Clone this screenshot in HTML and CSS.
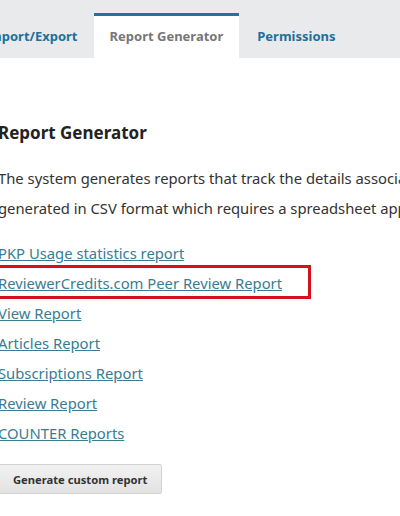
FILE: index.html
```html
<!DOCTYPE html>
<html>
<head>
  <title>Statistics - Report Generator</title>
  <link rel="stylesheet" href="styles.css">
</head>
<body>
  <div class="tabs">
    <a class="tab" href="#">Import/Export</a>
    <a class="tab active" href="#">Report Generator</a>
    <a class="tab" href="#">Permissions</a>
  </div>

  <div class="panel">
    <h2>Report Generator</h2>
    <p class="intro">The system generates reports that track the details associated with site usage and submissions over a given period of time. Reports are<br>generated in CSV format which requires a spreadsheet application to view.</p>

    <ul class="report-list">
      <li><a href="#">PKP Usage statistics report</a></li>
      <li class="highlight"><a href="#">ReviewerCredits.com Peer Review Report</a></li>
      <li><a href="#">View Report</a></li>
      <li><a href="#">Articles Report</a></li>
      <li><a href="#">Subscriptions Report</a></li>
      <li><a href="#">Review Report</a></li>
      <li><a href="#">COUNTER Reports</a></li>
    </ul>

    <button class="custom-button">Generate custom report</button>
  </div>
</body>
</html>
```

FILE: styles.css
```css
body {
  margin: 0;
  font-family: "Noto Sans", "Open Sans", sans-serif;
  background-color: #fff;
  color: #222;
  overflow: hidden;
}
.tabs {
  display: flex;
  background-color: #e8eaeb;
  height: 58px;
  padding-top: 13px;
  box-sizing: border-box;
  margin-left: -32px;
  white-space: nowrap;
}
.tab {
  display: block;
  padding: 0 16px;
  line-height: 41px;
  font-size: 13px;
  font-weight: bold;
  color: #1f6f9c;
  text-decoration: none;
  border-top: 3px solid transparent;
}
.tab.active {
  background-color: #fff;
  color: #777;
  border-top-color: #2a6f96;
  margin-right: 2px;
}
.panel {
  margin-left: -2px;
  padding-top: 60px;
}
.panel h2 {
  margin: 0 0 15px 0;
  font-size: 17px;
  font-weight: bold;
  line-height: 30px;
}
.intro {
  margin: 0 0 15px 0;
  font-size: 14.8px;
  line-height: 30px;
  color: #333;
  white-space: nowrap;
}
.report-list {
  list-style: none;
  margin: 0;
  padding: 0;
}
.report-list li {
  font-size: 14.8px;
  line-height: 30px;
}
.report-list a {
  color: #3a7c92;
}
.report-list .highlight {
  position: relative;
}
.report-list .highlight::after {
  content: "";
  position: absolute;
  left: -10px;
  top: -3px;
  bottom: -1px;
  width: 323px;
  box-sizing: border-box;
  border: 3px solid #d3121c;
  pointer-events: none;
}
.custom-button {
  margin-top: 16px;
  padding: 0 14px;
  height: 30px;
  font-family: inherit;
  font-size: 11.2px;
  font-weight: bold;
  color: #333;
  background: linear-gradient(#f2f2f2, #e2e2e2);
  border: 1px solid #d2d2d2;
  border-radius: 2px;
}
```
